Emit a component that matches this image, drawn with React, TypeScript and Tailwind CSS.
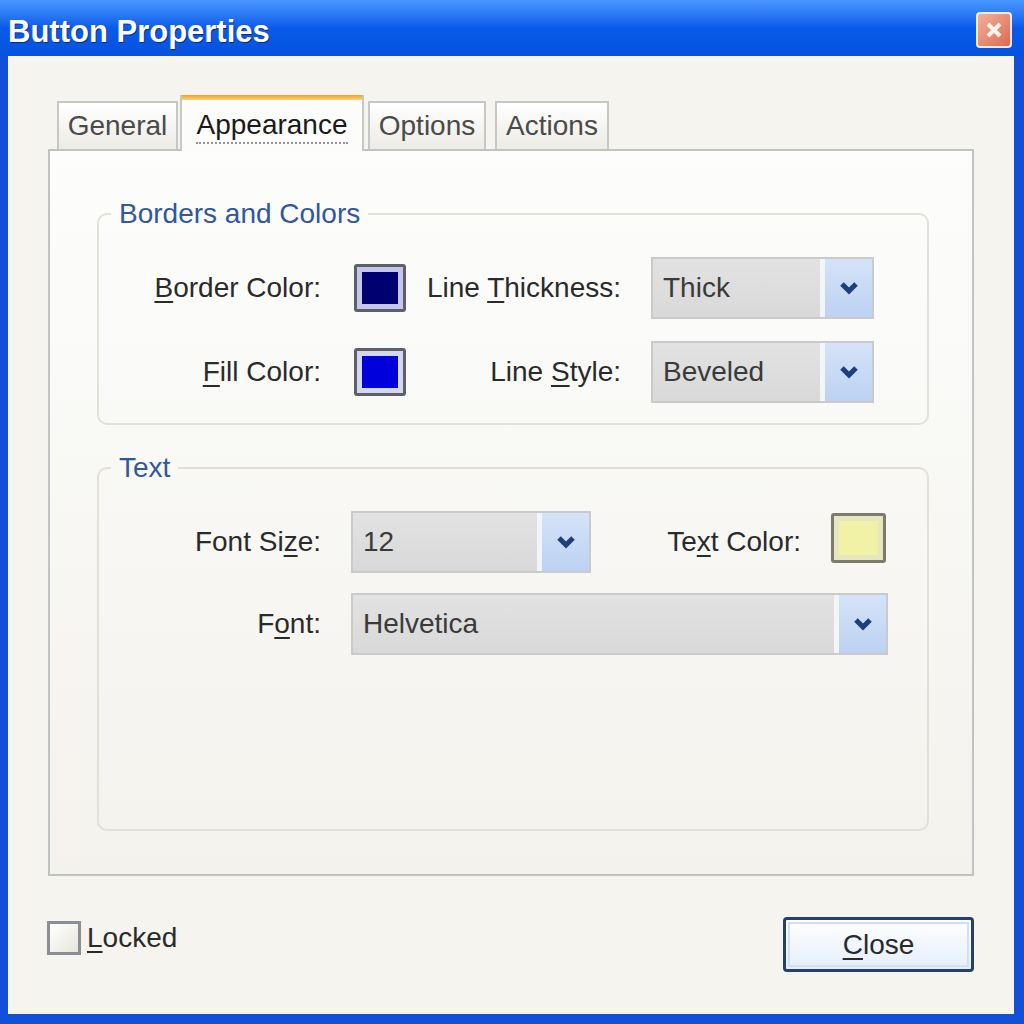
import React from 'react';

const Chevron: React.FC = () => (
    <svg width="22" height="16" viewBox="0 0 22 16">
        <path d="M4 4 L11 11 L18 4" fill="none" stroke="#1d3f7a" strokeWidth="5" />
    </svg>
);

const Combo: React.FC<{ value: string; className: string }> = ({ value, className }) => (
    <div className={`flex h-[62px] border-2 border-[#cacaca] bg-gradient-to-b from-[#e2e2e2] to-[#d9d9d9] ${className}`}>
        <div className="flex-1 flex items-center pl-[10px] text-[#3a3a3a]">{value}</div>
        <div className="w-[52px] border-l-[5px] border-[#f2f6fc] bg-gradient-to-b from-[#d4e3f8] to-[#bcd2f2] flex items-center justify-center">
            <Chevron />
        </div>
    </div>
);

const Swatch: React.FC<{ outer: string; ring: string; fill: string; size: string }> = ({ outer, ring, fill, size }) => (
    <div className={`rounded-[3px] border-[3px] p-[5px] ${size} ${outer} ${ring}`}>
        <div className={`w-full h-full ${fill}`} />
    </div>
);

const Key: React.FC<{ children: React.ReactNode }> = ({ children }) => (
    <span className="underline underline-offset-[4px] decoration-[2px]">{children}</span>
);

const Tab: React.FC<{ label: string; selected?: boolean; className?: string }> = ({ label, selected, className }) =>
    selected ? (
        <div className={`relative z-10 h-[56px] -mb-[2px] flex flex-col bg-[#fcfcfb] border-x-2 border-[#c5c8c6] ${className}`}>
            <div className="h-[5px] bg-gradient-to-b from-[#e8a13a] to-[#ffd36b]" />
            <div className="flex-1 flex items-center justify-center text-[#1a1a1a]">
                <span className="border-b-2 border-dotted border-[#9a8e9e] leading-[34px]">{label}</span>
            </div>
        </div>
    ) : (
        <div className={`h-[48px] flex items-center justify-center border-2 border-b-0 border-[#c5c8c6] bg-gradient-to-b from-[#ffffff] to-[#ecebe5] text-[#4a4a4a] ${className}`}>
            {label}
        </div>
    );

export default function App() {
    return (
        <div className="w-[1024px] h-[1024px] bg-[#1250d8] flex flex-col font-['Liberation_Sans',Arial,sans-serif] text-[28px] text-[#2a2a2a]">
            {/* Title bar */}
            <div className="h-[56px] flex items-center bg-gradient-to-b from-[#4a98ff] via-[#0a5ae9] to-[#0553de]">
                <span className="pl-[8px] pt-[8px] text-[31px] font-bold text-white [text-shadow:1px_1px_0_#0a2c88]">Button Properties</span>
                <div className="ml-auto mr-[12px] mt-[4px] w-[36px] h-[36px] rounded-[4px] border-2 border-[#f4e8ee] bg-gradient-to-br from-[#f2b09a] to-[#dc6a50] flex items-center justify-center">
                    <svg width="20" height="20" viewBox="0 0 20 20">
                        <path d="M4 4 L16 16 M16 4 L4 16" stroke="#fff4ee" strokeWidth="4" />
                    </svg>
                </div>
            </div>

            {/* Client area */}
            <div className="flex-1 ml-[8px] mr-[10px] mb-[10px] bg-[#f5f4ef] px-[40px] pt-[39px] flex flex-col">
                <div className="flex items-end pl-[9px]">
                    <Tab label="General" className="w-[121px]" />
                    <Tab label="Appearance" selected className="w-[184px] ml-[2px]" />
                    <Tab label="Options" className="w-[118px] ml-[4px]" />
                    <Tab label="Actions" className="w-[114px] ml-[9px]" />
                </div>

                <div className="h-[727px] border-2 border-[#bfc3c3] bg-gradient-to-b from-[#fdfdfc] to-[#f3f2ed] pt-[47px] pl-[47px] pr-[43px] pb-[43px] flex flex-col">
                    <fieldset className="rounded-[10px] border-2 border-[#e2e1d8] pb-[20px]">
                        <legend className="ml-[12px] px-[8px] leading-[32px] text-[#30589c]">Borders and Colors</legend>
                        <div className="pt-[27px] flex flex-col gap-[22px]">
                            <div className="flex items-center">
                                <span className="w-[222px] text-right"><Key>B</Key>order Color:</span>
                                <div className="ml-[33px]">
                                    <Swatch size="w-[52px] h-[48px]" outer="border-[#5e6066]" ring="bg-[#c4c6ec]" fill="bg-[#000070]" />
                                </div>
                                <span className="w-[215px] text-right">Line <Key>T</Key>hickness:</span>
                                <Combo value="Thick" className="ml-[30px] w-[223px]" />
                            </div>
                            <div className="flex items-center">
                                <span className="w-[222px] text-right"><Key>F</Key>ill Color:</span>
                                <div className="ml-[33px]">
                                    <Swatch size="w-[52px] h-[48px]" outer="border-[#5e6066]" ring="bg-[#d4d8ee]" fill="bg-[#0000dc]" />
                                </div>
                                <span className="w-[215px] text-right">Line <Key>S</Key>tyle:</span>
                                <Combo value="Beveled" className="ml-[30px] w-[223px]" />
                            </div>
                        </div>
                    </fieldset>

                    <fieldset className="mt-[27px] flex-1 rounded-[10px] border-2 border-[#e2e1d8]">
                        <legend className="ml-[12px] px-[8px] leading-[32px] text-[#30589c]">Text</legend>
                        <div className="pt-[27px] flex flex-col gap-[20px]">
                            <div className="flex items-center">
                                <span className="w-[222px] text-right">Font Si<Key>z</Key>e:</span>
                                <Combo value="12" className="ml-[30px] w-[240px]" />
                                <span className="w-[210px] text-right">Te<Key>x</Key>t Color:</span>
                                <div className="ml-[30px] -mt-[8px]">
                                    <Swatch size="w-[55px] h-[50px]" outer="border-[#7c7c6c]" ring="bg-[#e6e6c0]" fill="bg-[#f2f2a6]" />
                                </div>
                            </div>
                            <div className="flex items-center">
                                <span className="w-[222px] text-right">F<Key>o</Key>nt:</span>
                                <Combo value="Helvetica" className="ml-[30px] w-[537px]" />
                            </div>
                        </div>
                    </fieldset>
                </div>

                {/* Bottom row */}
                <div className="mt-[41px] flex items-start">
                    <div className="-ml-px flex items-center gap-[6px]">
                        <div className="w-[34px] h-[34px] border-[3px] border-[#8b8f95] bg-gradient-to-br from-[#ffffff] to-[#e6e5dc]" />
                        <span><Key>L</Key>ocked</span>
                    </div>
                    <div className="ml-auto w-[191px] h-[55px] rounded-[4px] border-[3px] border-[#26406c] bg-gradient-to-b from-[#ffffff] to-[#e4eefa] p-[2px]">
                        <div className="w-full h-full border-2 border-[#cfe0f6] flex items-center justify-center">
                            <span><Key>C</Key>lose</span>
                        </div>
                    </div>
                </div>
            </div>
        </div>
    );
}
